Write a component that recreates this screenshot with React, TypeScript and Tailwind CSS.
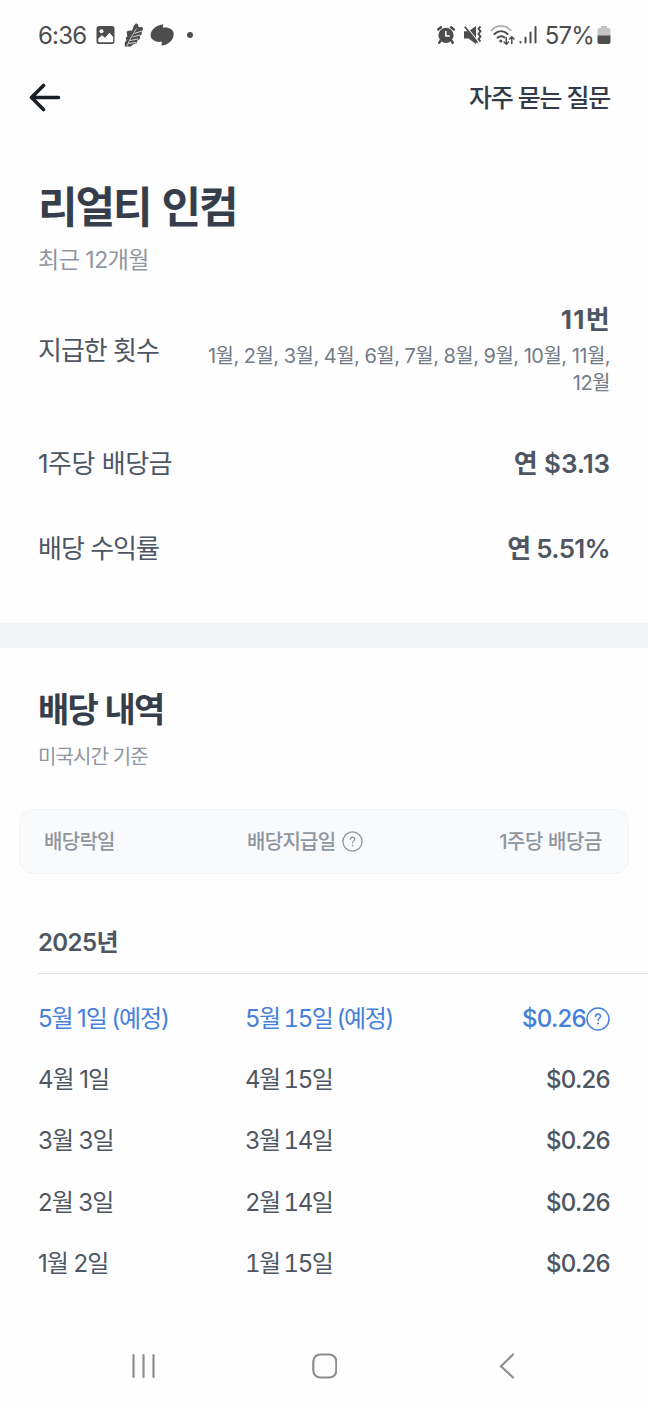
import React from 'react'

const summary = [
  { label: '1주당 배당금', value: '연 $3.13', labelClass: 'tracking-[-0.5px]', valueClass: 'tracking-[-0.1px]' },
  { label: '배당 수익률', value: '연 5.51%', labelClass: 'tracking-[-1px]', valueClass: 'tracking-[-0.7px]' },
]

const dividends = [
  { exDate: '5월 1일 (예정)', payDate: '5월 15일 (예정)', amount: '$0.26', scheduled: true },
  { exDate: '4월 1일', payDate: '4월 15일', amount: '$0.26' },
  { exDate: '3월 3일', payDate: '3월 14일', amount: '$0.26' },
  { exDate: '2월 3일', payDate: '2월 14일', amount: '$0.26' },
  { exDate: '1월 2일', payDate: '1월 15일', amount: '$0.26' },
]

function HelpIcon({ className }: { className?: string }) {
  return (
    <svg viewBox="0 0 24 24" fill="none" stroke="currentColor" strokeLinecap="round" strokeLinejoin="round" className={className}>
      <circle cx="12" cy="12" r="11" strokeWidth="1.5" />
      <path d="M9.6 9.5c0-1.5 1-2.5 2.5-2.5s2.4.9 2.4 2.3c0 2-2.4 2-2.4 4.2" strokeWidth="1.5" />
      <circle cx="12.1" cy="16.6" r="1" fill="currentColor" stroke="none" />
    </svg>
  )
}

function StatusBar() {
  return (
    <div className="flex h-[70px] shrink-0 items-center justify-between pr-[37px] pl-[38px] text-[24px] text-[#4d4d4d]">
      <div className="flex items-center">
        <span className="w-[57px] pt-px tracking-[-0.8px]">6:36</span>
        <svg width="20" height="20" viewBox="0 0 20 20">
          <rect x="1.5" y="1" width="18" height="18" rx="2.5" fill="#4d4d4d" />
          <circle cx="6.5" cy="6.3" r="2" fill="#fff" />
          <path d="M3.3 13.5l3.7-3.3 3 2.6 4.5-5 3.7 4.2v4.3a1 1 0 0 1-1 1H4.3a1 1 0 0 1-1-1z" fill="#fff" />
        </svg>
        <svg width="20" height="26" viewBox="0 0 20 26" className="ml-[9px]">
          <path d="M12 1.2l2 1.2.5 2.8 4-.2.5 2.5-1.5 2 .3 2.8-2 1.8.2 2.7-2.5 1.6-1 2.8-3.5 1.2-2 2H.8v-4.2l1.700-2-.8-2.400 1.600-1.300-.7-5 3-1 2.500.2 1.400-4.500z" fill="#4d4d4d" />
          <path d="M3 24c2.500-6.500 6-12 9.500-17.500" fill="none" stroke="#fff" strokeWidth=".7" />
          <path d="M4.500 21.500l7.500-1M6.200 18.500l7.800-1.500M8.500 15l7.500-2M10.500 11.500l7-2.500" fill="none" stroke="#fff" strokeWidth=".8" />
        </svg>
        <svg width="24" height="24" viewBox="0 0 24 24" className="ml-[6px]">
          <path d="M13.3 1.2L12.800 4.600C19 3.800 23.700 6.300 23.700 11c0 6-5.500 11-12.200 11.600l.4-3.800C5.500 19.600.6 16.800.6 12.300.6 6.500 7 1.800 13.300 1.200z" fill="#4d4d4d" />
        </svg>
        <span className="ml-[13px] size-[6px] rounded-full bg-[#4d4d4d]" />
      </div>
      <div className="flex items-center">
        <svg width="20" height="20" viewBox="0 0 20 20">
          <circle cx="10" cy="10.3" r="7.6" fill="#4d4d4d" />
          <path d="M2.2 4.5L5 2.2M17.8 4.5L15 2.2M4.7 15.5L3.2 17.7M15.3 15.500l1.500 2.200" stroke="#4d4d4d" strokeWidth="2.400" strokeLinecap="round" />
          <path d="M9.800 6v5h4" fill="none" stroke="#fff" strokeWidth="1.500" />
        </svg>
        <svg width="20" height="20" viewBox="0 0 20 20" className="ml-[7px]">
          <path d="M1 6.300h4.500L13 1v18l-7.500-5.500H1z" fill="#4d4d4d" />
          <path d="M3.300 1.500l12 15" stroke="#fff" strokeWidth="1.200" />
          <path d="M1.800 1.800l12.700 16" stroke="#4d4d4d" strokeWidth="1.800" />
          <path d="M17.500 1.500l-2 2.200 2 2.600-2 2.700 2 2.600-2 2.600 2 2.300" fill="none" stroke="#4d4d4d" strokeWidth="1.900" />
        </svg>
        <svg width="25" height="21" viewBox="0 0 25 21" className="ml-[7px]" fill="none" strokeLinecap="round">
          <path d="M1.500 5.200C7-.3 15-.3 20.500 5.200" stroke="#b5b5b5" strokeWidth="2" />
          <path d="M4.400 9c4-3.800 9.200-3.800 13.200 0M7.500 12.700c2.300-2 4.600-2 6.900-.3" stroke="#4d4d4d" strokeWidth="2" />
          <circle cx="10.800" cy="16" r="1.500" fill="#4d4d4d" />
          <path d="M16.300 12.500v6.500M14 17l2.300 2.300L18.500 17M21.800 18.500V12M19.600 14l2.200-2.200L24 14" stroke="#4d4d4d" strokeWidth="1.500" />
        </svg>
        <svg width="18" height="20" viewBox="0 0 18 20" className="ml-[4px]" stroke="#4d4d4d" strokeWidth="2" strokeLinecap="round">
          <path d="M1.500 17v.5M6.500 12.500v5M11.500 7.500v10M16.500 2v15.500" />
        </svg>
        <span className="ml-[8px] pt-px tracking-[-0.8px]">57%</span>
        <svg width="14" height="20" viewBox="0 0 14 20" className="ml-[3px]">
          <path d="M4 1h6v2h1.500a2 2 0 0 1 2 2v6H.5V5a2 2 0 0 1 2-2H4z" fill="#c4c4c4" />
          <path d="M.5 10.500h13V17a2 2 0 0 1-2 2h-9a2 2 0 0 1-2-2z" fill="#4d4d4d" />
        </svg>
      </div>
    </div>
  )
}

function NavBar() {
  return (
    <div className="mt-auto flex h-[76px] shrink-0 items-center pl-[131px] text-[#8e8e8e]">
      <svg width="26" height="26" viewBox="0 0 26 26" stroke="currentColor" strokeWidth="2.2" strokeLinecap="round">
        <path d="M2.500 2v22M12.500 2v22M22.500 2v22" />
      </svg>
      <svg width="26" height="26" viewBox="0 0 26 26" fill="none" stroke="currentColor" strokeWidth="2.2" className="ml-[154px]">
        <rect x="2.300" y="1.500" width="23" height="23" rx="7" />
      </svg>
      <svg width="16" height="26" viewBox="0 0 16 26" fill="none" stroke="currentColor" strokeWidth="2.2" strokeLinecap="round" className="ml-[162px]">
        <path d="M14 1.500L2 13.200 14 24.500" />
      </svg>
    </div>
  )
}

export default function App() {
  return (
    <div className="flex h-[1404px] w-[648px] flex-col overflow-hidden bg-[#fefefe] font-['Inter','Noto_Sans_CJK_KR',sans-serif] text-[#4e5663]">
      <StatusBar />

      <header className="flex h-[54px] shrink-0 items-center justify-between pr-[38px] pl-[28px]">
        <svg width="34" height="30" viewBox="0 0 34 30" fill="none" stroke="#1a1f27" strokeWidth="3.6" strokeLinecap="round" strokeLinejoin="round">
          <path d="M30.500 15.500H3.500M15.500 3.500L3.500 15.500l12 12" />
        </svg>
        <button className="pt-[3px] text-[25px] font-medium tracking-[-1.3px] text-[#333b48]">자주 묻는 질문</button>
      </header>

      <section className="px-[38px]">
        <h1 className="mt-[55px] text-[43px] leading-[56px] font-bold tracking-[-2.1px] text-[#363e4b] [word-spacing:3px]">리얼티 인컴</h1>
        <p className="mt-[9px] text-[23px] leading-[32px] tracking-[-0.5px] text-[#8f969f]">최근 12개월</p>

        <div className="mt-[28px] flex items-center justify-between">
          <span className="shrink-0 text-[26px] leading-[32px] tracking-[-1px]">지급한 횟수</span>
          <div className="w-[410px] text-right">
            <p className="-mr-px text-[26px] leading-[32px] font-bold tracking-[1.3px]">11번</p>
            <p className="mt-[7px] text-[20px] leading-[27px] tracking-[-0.52px] text-[#737b86]">
              1월, 2월, 3월, 4월, 6월, 7월, 8월, 9월, 10월, 11월, 12월
            </p>
          </div>
        </div>

        <div className="mt-[51px] flex flex-col gap-[53px]">
          {summary.map(s => (
            <div key={s.label} className="flex items-center justify-between leading-[32px]">
              <span className={`text-[26px] ${s.labelClass}`}>{s.label}</span>
              <span className={`text-[26px] font-semibold ${s.valueClass}`}>{s.value}</span>
            </div>
          ))}
        </div>
      </section>

      <div className="mt-[58px] h-[25px] shrink-0 bg-[#f2f3f5]" />

      <section>
        <h2 className="mt-[42px] pl-[38px] text-[34px] leading-[40px] font-bold tracking-[-1.7px] text-[#363e4b] [word-spacing:1px]">배당 내역</h2>
        <p className="mt-[13px] pl-[38px] text-[20px] leading-[28px] tracking-[-0.9px] text-[#8f969f]">미국시간 기준</p>

        <div className="mt-[38px] mr-[19px] ml-[19px] flex h-[65px] items-center rounded-[14px] border border-[#f2f4f6] bg-[#f9fafc] pr-[26px] pl-[24px] text-[20px] font-medium tracking-[-0.7px] text-[#8f969f]">
          <span className="w-[203px] pt-px">배당락일</span>
          <span className="flex items-center gap-[6px]">
            <span className="pt-px">배당지급일</span>
            <HelpIcon className="size-[21px]" />
          </span>
          <span className="ml-auto pt-px tracking-[-0.4px]">1주당 배당금</span>
        </div>

        <h3 className="mt-[53px] pl-[38px] text-[24px] leading-[32px] font-semibold tracking-[-0.6px]">2025년</h3>
        <div className="mt-[14px] ml-[38px] h-px bg-[#e2e3e5]" />

        <div className="mt-[14px] pr-[38px] pl-[38px] text-[24px]">
          {dividends.map(d => (
            <div key={d.exDate} className={d.scheduled ? 'flex h-[61.4px] items-center text-[#4580dd]' : 'flex h-[61.4px] items-center'}>
              <span className={d.scheduled ? 'w-[207px] tracking-[-1.1px] [word-spacing:-1px]' : 'w-[207px] tracking-[-0.9px] [word-spacing:-0.5px]'}>{d.exDate}</span>
              <span className="tracking-[-1.5px] tabular-nums [word-spacing:-1px]">{d.payDate}</span>
              <span className="ml-auto flex items-center font-medium tracking-[-0.7px]">
                {d.amount}
                {d.scheduled && <HelpIcon className="size-[24px]" />}
              </span>
            </div>
          ))}
        </div>
      </section>

      <NavBar />
    </div>
  )
}
